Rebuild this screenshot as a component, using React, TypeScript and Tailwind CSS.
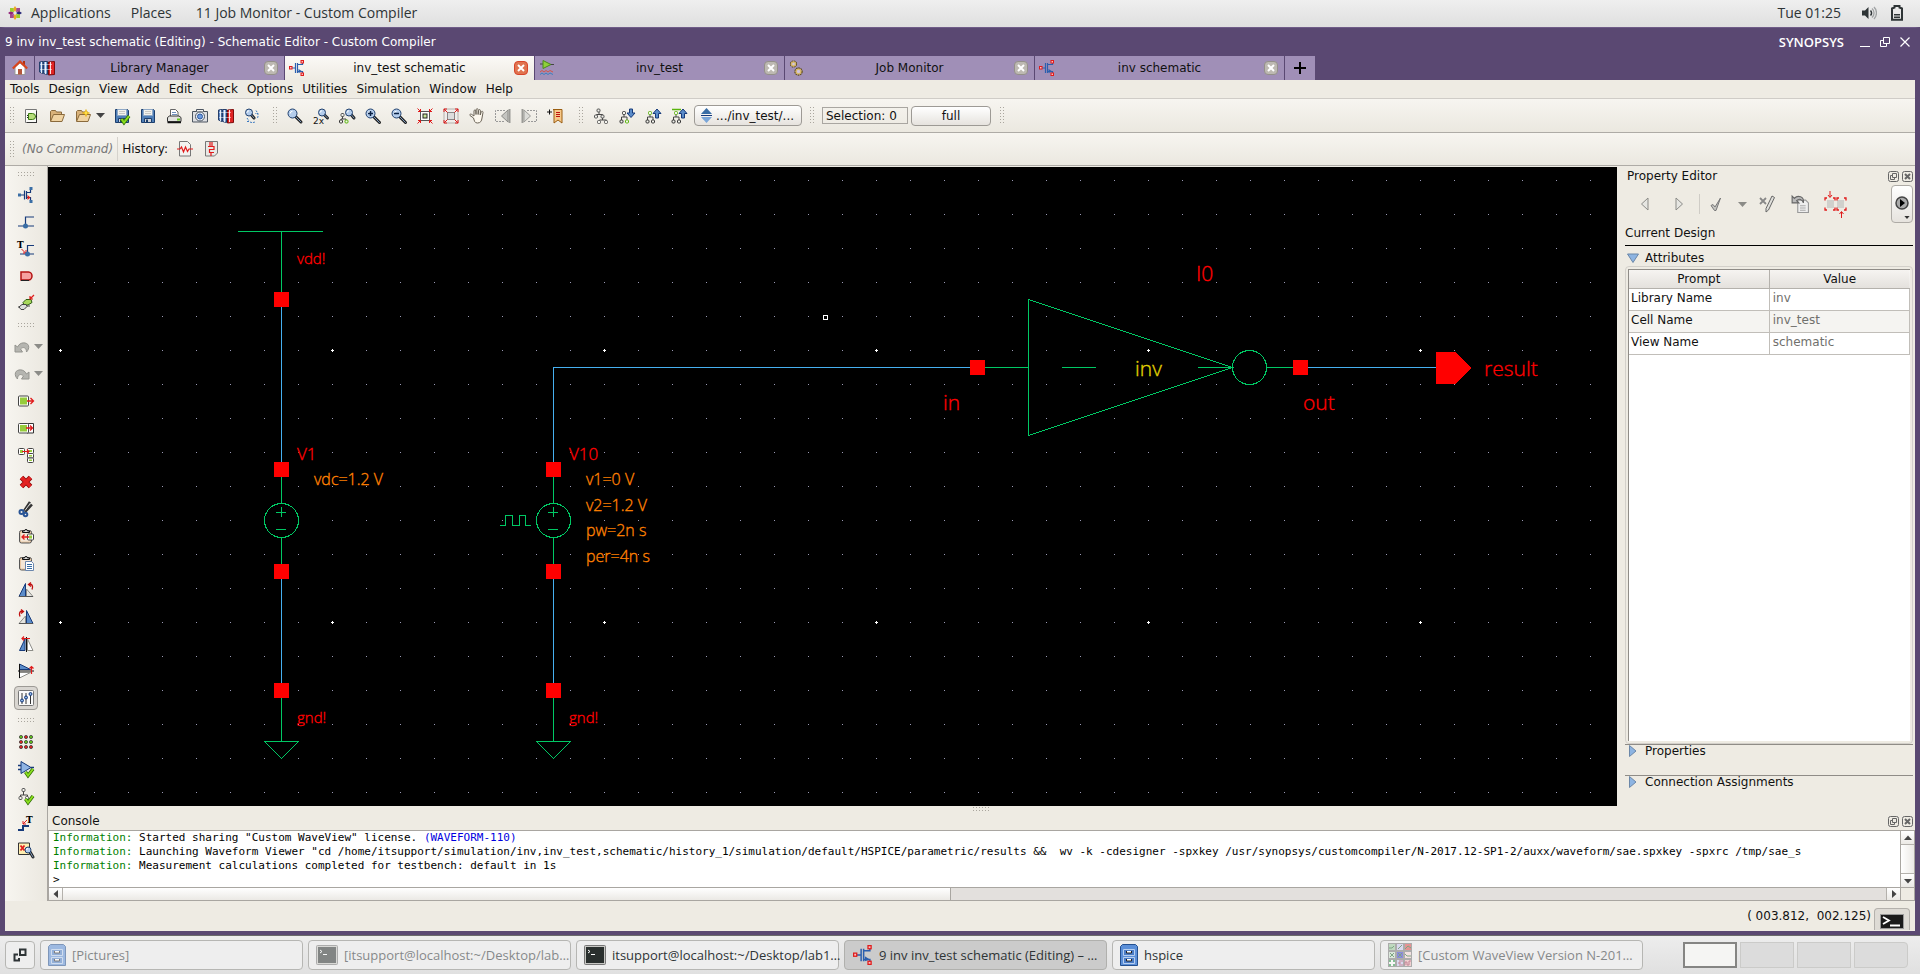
import React from 'react';

const BLUE = '#3a6ea5';
const NAVY = '#163a7a';
const RED = '#e01b1b';

type IconName = keyof typeof icons;

const nodes = (x: number, y: number, color = '#555') => (
  <rect x={x} y={y} width="3" height="3" rx="1" fill="#f4f4ee" stroke={color} />
);

const lens = (cx: number, cy: number, r: number, tx: number, ty: number) => (
  <>
    <path d={`M${cx + r * 0.7} ${cy + r * 0.7}L${tx} ${ty}`} stroke="#222" strokeWidth="3" strokeLinecap="round" />
    <path d={`M${cx + r * 0.7} ${cy + r * 0.7}L${tx} ${ty}`} stroke="#7f9cc0" strokeWidth="1" strokeLinecap="round" />
    <circle cx={cx} cy={cy} r={r} fill="#b4cdec" stroke="#20406e" />
    <path d={`M${cx - r * 0.5} ${cy}a${r * 0.5} ${r * 0.5} 0 0 1 ${r * 0.5} -${r * 0.5}`} stroke="#fff" />
  </>
);

const floppy = (
  <>
    <path d="M1.5 1.5h12l1 1v12h-13z" fill="#4f7fb8" stroke="#1c3e6d" />
    <path d="M3.5 1.5h9v6h-9z" fill="#f2f2ee" stroke="#8fa8c6" />
    <path d="M5 3.5h6M5 5.5h6" stroke="#c8c8c4" />
    <path d="M4.5 10.5h7v4h-7z" fill="#cfd3d8" stroke="#1c3e6d" />
    <path d="M6 11.5h2v3H6z" fill="#1c3e6d" />
  </>
);

const check = (
  <>
    <path d="M7.5 11l2.5 3.5L15 8" stroke="#2f6d05" strokeWidth="3.5" />
    <path d="M7.5 11l2.5 3.5L15 8" stroke="#8ade1f" strokeWidth="2" />
  </>
);

const folder = (
  <>
    <path d="M1.5 13V3.5l1-1h4l1 1.5h5v3" fill="#d9b27a" stroke="#8a6a3c" />
    <path d="M1.5 13.5L4.5 6.5h11l-2.5 7z" fill="#f0d3a2" stroke="#8a6a3c" />
  </>
);

const fet = (wire: string, pin: string) => (
  <>
    <path d="M2 8h4M6.5 3v10M8.5 3v10M9 4.5h4.5V2M9 11.5h4.5V14" stroke={wire} strokeWidth="1.2" />
    <path d="M9.5 9l4 2.5-4 1.5z" fill={wire} />
    <rect x="0.5" y="6.5" width="2.5" height="2.5" fill="#fbb" stroke={pin} />
    <rect x="12" y="0.5" width="2.5" height="2.5" fill="#fbb" stroke={pin} />
    <rect x="12" y="13" width="2.5" height="2.5" fill="#fbb" stroke={pin} />
  </>
);

const hier = (accent: boolean, top: string) => (
  <>
    <path d="M5 6v3M2.5 12V9H8v3" stroke="#444" />
    {nodes(3.5, 3.5, top)}
    {nodes(1, 12, '#333')}
    {nodes(6.5, 12, accent ? '#5ab40c' : '#333')}
  </>
);

const mirrorTri = (
  <>
    <path d="M7.5 1.5V14.5H1z" fill="#5b8cc9" stroke={NAVY} />
    <path d="M8.5 7l6.5 7.5H8.5z" fill="#e4e4e0" stroke="#8d8d88" />
    <path d="M1 14.5h14" stroke="#555" />
  </>
);

const clipboard = (
  <>
    <rect x="1.5" y="2.5" width="12" height="12.5" rx="2" fill="#e9c9a6" stroke="#555" />
    <rect x="3" y="5" width="9" height="8.5" fill="#f4e6d6" />
    <path d="M4.5 4.5V3h2a1.5 1.5 0 0 1 3 0h2v1.5z" fill="#ddd" stroke="#111" />
  </>
);

const greenBox = (x: number, y: number, w: number, h: number) => (
  <>
    <rect x={x} y={y} width={w} height={h} rx="1" fill="#fff" stroke="#444" />
    <rect x={x + 1.5} y={y + 1.5} width={w - 3} height={h - 3} fill="#96cc3c" />
  </>
);

const icons = {
  newCell: (
    <>
      <path d="M2.5 1.5h11v13h-11z" fill="#fafaf7" stroke="#777" />
      <path d="M13 14.5H4M13.5 3v12" stroke="#333" />
      <path d="M4 7.5h2M4 9.5h2M11 8.5h3" stroke="#222" />
      <path d="M5.5 5.5h4a3 3 0 0 1 0 6h-4z" fill="#b7dd7a" stroke="#3b7a12" />
    </>
  ),
  open: folder,
  openStar: (
    <>
      {folder}
      <path d="M11 1.5l1 2.5 2.5 1-2.5 1-1 2.5L10 6 7.5 5 10 4z" fill="#ffe14a" stroke="#e5a800" strokeWidth=".6" />
    </>
  ),
  saveCheck: (
    <>
      {floppy}
      {check}
    </>
  ),
  save: floppy,
  print: (
    <>
      <path d="M4.5 8V1.5h5l2.5 2.5v4" fill="#fff" stroke="#666" />
      <path d="M6 4.5h4M6 6.5h5" stroke="#6e8fbd" />
      <path d="M1.5 13.5v-4l2-1.5h9.5l2 1.5v4z" fill="#e3e3df" stroke="#333" />
      <path d="M1.5 14.5h13.5" stroke="#111" strokeWidth="1.5" />
      <rect x="11" y="10.5" width="3" height="2" fill="#62c61c" />
    </>
  ),
  camera: (
    <>
      <path d="M.5 3.5h15v10.5H.5z" fill="#dedfe2" stroke="#4c5560" />
      <path d="M4.5 3.5V1.5h7v2" fill="#f2f2f2" stroke="#4c5560" />
      <circle cx="8" cy="8.5" r="4.5" fill="#e9f0fa" stroke="#4c5560" />
      <circle cx="8" cy="8.5" r="2.5" fill="#6d9be0" stroke="#2c569b" />
    </>
  ),
  books: (
    <>
      <path d="M.5 2l3.5-.5v12L.5 12z" fill="#5f88c4" stroke="#263f6b" />
      <path d="M4.5 1.5h4v13l-4-1z" fill="#7fa3d4" stroke="#263f6b" />
      <path d="M9.5 2l6-.5v13l-6 .5z" fill="#e02525" stroke="#7d0c0c" />
      <path d="M2.5 2v11M6.5 2v12M11.5 2v12" stroke="#fff" strokeOpacity=".85" />
      <path d="M1 4.5h12M1 9.5h12" stroke="#fff" strokeOpacity=".5" />
    </>
  ),
  sync: (
    <>
      {lens(5, 4.5, 3.5, 10, 10)}
      <path d="M12 2.5l2 3-3 0M13.5 5a6 6 0 0 1 0 5M3 10l2 3M3 13.5h3M6 14a6 6 0 0 0 5 0" stroke="#3c7ac0" strokeDasharray="2 1" />
    </>
  ),
  zoom: lens(5.5, 5.5, 4.5, 14, 14),
  zoom2x: (
    <>
      {lens(9, 4.5, 3.5, 14.5, 10)}
      <text x="0" y="15.5" fontSize="9" fill="#111" fontFamily="DejaVu Sans, sans-serif">2x</text>
    </>
  ),
  zoomHier: (
    <>
      {lens(10, 4.5, 3.5, 15, 10)}
      <path d="M3.5 8v3M2 13v-2h5v2" stroke="#444" />
      {nodes(2, 5.5)}
      {nodes(0.5, 12, '#333')}
      {nodes(6, 12, '#5ab40c')}
    </>
  ),
  zoomIn: (
    <>
      {lens(5.5, 5.5, 4.5, 14.5, 14.5)}
      <path d="M3 5.5h5M5.5 3v5" stroke="#0a2146" strokeWidth="1.5" />
    </>
  ),
  zoomOut: (
    <>
      {lens(5.5, 5.5, 4.5, 14.5, 14.5)}
      <path d="M3 5.5h5" stroke="#0a2146" strokeWidth="1.5" />
    </>
  ),
  fitIn: (
    <>
      <rect x="3.5" y="3.5" width="9" height="9" fill="#fff" stroke="#555" />
      <rect x="6" y="6" width="4" height="4" fill="#c8e59a" stroke="#222" />
      <path d="M.5 .5l3 3M15.5 .5l-3 3M.5 15.5l3-3M15.5 15.5l-3-3M3.5 1v2.5H1M12.5 1v2.5H15M3.5 15v-2.5H1M12.5 15v-2.5H15" stroke={RED} />
    </>
  ),
  fitOut: (
    <>
      <rect x="1" y="1" width="14" height="14" fill="#efedea" stroke="#b5b2ad" />
      <rect x="4.5" y="4.5" width="7" height="7" fill="#ddd" stroke="#888" />
      <path d="M1 1l3.5 3.5M15 1l-3.5 3.5M1 15l3.5-3.5M15 15l-3.5-3.5M1 4V1h3M12 1h3v3M1 12v3h3M15 12v3h-3" stroke={RED} />
    </>
  ),
  hand: (
    <path
      d="M4.5 10L1 7.5c-.8-1 .5-1.8 1.500-1.200L5 8V3c0-1.400 1.800-1.400 1.800 0l.2 3.500L7.200 1.700c0-1.400 1.900-1.400 1.900 0v4.800l.5-4c.2-1.300 1.900-1.200 1.800.2L11.200 7l1-3c.5-1.200 2-.8 1.800.5L13 10c-.3 3-1.500 5-4.500 5S5.500 13 4.500 10z"
      fill="#fdf8ee"
      stroke="#6a6357"
    />
  ),
  prevArea: (
    <>
      <path d="M10 2.5H.5v11H10" stroke="#999" strokeDasharray="2 1" />
      <path d="M13 2v12L6.500 8z" fill="#c4c4c0" stroke="#8b8b87" />
      <path d="M14.5 1v14" stroke="#9b9b97" strokeWidth="2" />
    </>
  ),
  nextArea: (
    <>
      <path d="M6 2.5h9.500v11H6" stroke="#999" strokeDasharray="2 1" />
      <path d="M3 2v12l6.500-6z" fill="#dcdcd8" stroke="#9b9b97" />
      <path d="M1.5 1v14" stroke="#9b9b97" strokeWidth="2" />
    </>
  ),
  bookmark: (
    <>
      <path d="M0 4h5M2.5 1.500v5" stroke="#111" />
      <path d="M6 1.500h9v13.500l-4-3-4 3V2z" fill="#f7c98a" stroke="#9a5d10" />
      <path d="M9 4.500h4M9 6.500h4M9 8.500h4" stroke="#c01010" />
    </>
  ),
  tree: (
    <>
      <path d="M6 4v2M3.500 8V6.500h6v2M9.500 10v2M6.500 14v-2h7v2" stroke="#444" />
      {nodes(4, 1)}
      {nodes(1.5, 7)}
      {nodes(8, 7)}
      {nodes(4.5, 12.5)}
      {nodes(11.5, 12.5)}
    </>
  ),
  descend: (
    <>
      {hier(true, '#333')}
      <path d="M10.500 1h3v4H16l-4 4.500L8 5h2.500z" fill="#5b8cc9" stroke={NAVY} />
    </>
  ),
  ascend: (
    <>
      {hier(false, '#5ab40c')}
      <path d="M12 1l4 4.500h-2.500V10h-3V5.500H8z" fill="#5b8cc9" stroke={NAVY} />
    </>
  ),
  ascendTop: (
    <>
      {hier(false, '#5ab40c')}
      <path d="M1 1.500h9" stroke="#5ab40c" strokeWidth="1.5" />
      <path d="M12 1l4 4.500h-2.500V10h-3V5.500H8z" fill="#5b8cc9" stroke={NAVY} />
    </>
  ),
  histWave: (
    <>
      <path d="M2.500 .5h8l3 3v11.500h-11z" fill="#f3f3f0" stroke="#777" />
      <path d="M0 8h3l1.500-2 2 5 2-5 2 4.500L12 8h4" stroke={RED} strokeWidth="1.2" />
    </>
  ),
  histScript: (
    <>
      <path d="M2.500 .5h12v11.500l-3 3h-9z" fill="#e9e9e5" stroke="#777" />
      <path d="M7 1v4M5 5.500h6v3H6.500v3H11M9 1v4M8 12v3" stroke={RED} strokeWidth="1.2" />
    </>
  ),
  instance: (
    <>
      <path d="M3 8h3M6.500 3.500v9M8.500 4v8M9 5.500h3.500V2M9 10.500h3.500V14" stroke={NAVY} strokeWidth="1.2" />
      <path d="M9.500 8l3 2.500-3 2.500z" fill={RED} />
      <rect x="0" y="6.5" width="3" height="3" fill={BLUE} />
      <rect x="11.5" y="0" width="3" height="3" fill={BLUE} />
      <rect x="11.5" y="13" width="3" height="3" fill={BLUE} />
    </>
  ),
  wire: (
    <>
      <path d="M0 12h16M7.500 12V3H16" stroke={NAVY} strokeWidth="1.2" />
      <circle cx="7.5" cy="12" r="2.5" fill={BLUE} />
    </>
  ),
  wireName: (
    <>
      <text x="-1" y="7" fontSize="9" fontWeight="bold" fill="#000" fontFamily="DejaVu Serif, serif">T</text>
      <path d="M2 13h14M9.500 13V4.500H16" stroke={NAVY} strokeWidth="1.2" />
      <path d="M3.500 8l4 4M8 9v3H5" stroke={RED} />
      <circle cx="9.5" cy="13" r="2.5" fill={BLUE} />
    </>
  ),
  pin: (
    <>
      <path d="M3 4h7.500c2 0 3.500 2 3.500 4s-1.500 4-3.500 4H3z" fill="#f6a0a0" stroke="#b31212" strokeWidth="1.5" />
      <path d="M3 12.500h8" stroke="#222" />
    </>
  ),
  connect: (
    <>
      <path d="M5 7.500l3-3 5 0 1 3-4 2.500H6z" fill="#a9d85c" stroke="#2c5c10" />
      <path d="M1 12l3-2.500h4l1 2-3 3H3zM0 12h2M9 11h3" fill="#ddd" stroke="#444" />
      <path d="M16 0l-4 4M12 1v3h3" stroke={RED} strokeWidth="1.2" />
    </>
  ),
  undo: <path d="M1 13V6l2.500 2C6 2.500 13 3 14.500 6.500c.8 2.500-.5 5-2 6.500 0-4-3-6-6-3l2 3z" fill="#b5b5b0" stroke="#94948f" />,
  redo: <path d="M15 13V6l-2.500 2C10 2.500 3 3 1.500 6.500c-.8 2.500.5 5 2 6.500 0-4 3-6 6-3l-2 3z" fill="#b5b5b0" stroke="#94948f" />,
  move: (
    <>
      {greenBox(0.5, 3, 10, 10)}
      <path d="M9 8h6M12.500 5l3 3-3 3" stroke={RED} strokeWidth="1.3" />
    </>
  ),
  stretch: (
    <>
      <path d="M9 3.500h6.500v9.500H9" fill="#fff" stroke="#333" />
      {greenBox(0.5, 3.5, 10, 9.5)}
      <path d="M8 8h6M12 5.500l2.500 2.500-2.500 2.500" stroke={RED} strokeWidth="1.3" />
    </>
  ),
  copy: (
    <>
      {greenBox(0.5, 1.5, 6, 6)}
      {greenBox(9.5, 1.5, 6, 5)}
      {greenBox(9.5, 6.5, 6, 4.5)}
      {greenBox(9.5, 11, 6, 4.5)}
      <path d="M4 4.500h7M9 2.500l2 2-2 2" stroke={RED} strokeWidth="1.2" />
    </>
  ),
  del: (
    <>
      <path d="M3.500 3.500l9 9M12.500 3.500l-9 9" stroke="#8d0707" strokeWidth="5" />
      <path d="M3.500 3.500l9 9M12.500 3.500l-9 9" stroke="#e32222" strokeWidth="3.5" />
    </>
  ),
  cut: (
    <>
      <path d="M12 1L6 10M14 3.500L7 11" stroke="#333" strokeWidth="2.5" />
      <path d="M12.500 2L7 9.500" stroke="#ddd" />
      <circle cx="3.5" cy="11" r="2" stroke="#2a5596" strokeWidth="2" />
      <circle cx="7.5" cy="13.5" r="1.8" stroke="#2a5596" strokeWidth="2" />
    </>
  ),
  pasteTo: (
    <>
      {clipboard}
      {greenBox(9.5, 6, 6, 6)}
      <path d="M11 9H4M6.500 6.500L4 9l2.500 2.500" stroke={RED} strokeWidth="1.3" />
    </>
  ),
  paste: (
    <>
      {clipboard}
      <path d="M7.500 6.500h6l2 2v7h-8z" fill="#fff" stroke="#6b86ac" />
      <path d="M9 9.500h5M9 11.500h5M9 13.500h5" stroke={BLUE} />
    </>
  ),
  rotL: (
    <>
      {mirrorTri}
      <path d="M11 2.500c3-1 4.500 1.500 3 5M13 .5l-2.500 2 2.500 2" stroke="#c01010" strokeWidth="1.3" />
    </>
  ),
  rotR: (
    <>
      <g transform="translate(16 0) scale(-1 1)">{mirrorTri}</g>
      <path d="M5 2.500c-3-1-4.500 1.500-3 5M3 .5l2.500 2-2.500 2" stroke="#c01010" strokeWidth="1.3" />
    </>
  ),
  mirrorX: (
    <>
      <path d="M7 3v11.500H1.500z" fill="#5b8cc9" stroke={NAVY} />
      <path d="M9.500 3v11.500H15z" fill="#fff" stroke="#8d8d88" />
      <path d="M8.500 1v15" stroke="#111" />
      <path d="M12 2.500H4M6 .5l-2 2 2 2" stroke={RED} strokeWidth="1.2" />
    </>
  ),
  mirrorY: (
    <>
      <path d="M1.500 1l11 5.500h-11z" fill="#5b8cc9" stroke={NAVY} />
      <path d="M1.500 15l11-5.500h-11z" fill="#fff" stroke="#8d8d88" />
      <path d="M0 8h16M1.500 1v14" stroke="#111" />
      <path d="M13.500 11V4M11.500 5.500l2-2 2 2" stroke={RED} strokeWidth="1.2" />
    </>
  ),
  sliders: (
    <>
      <rect x=".5" y=".5" width="15" height="15" rx="1" fill="#fafafa" stroke="#777" />
      <path d="M4 3v11M8 3v11M12.500 3v11" stroke="#333" />
      <circle cx="4" cy="10.5" r="1.5" fill="#8db4e8" stroke={NAVY} />
      <circle cx="8" cy="7.5" r="1.5" fill="#8db4e8" stroke={NAVY} />
      <circle cx="12.5" cy="4" r="1.5" fill="#8db4e8" stroke={NAVY} />
    </>
  ),
  matrix: (
    <>
      {[3, 8, 13].map((y, r) =>
        [3, 8, 13].map((x, c) => (
          <circle
            key={`${x}-${y}`}
            cx={x}
            cy={y}
            r="1.6"
            fill={(r === 0 && c !== 1) || (r === 1 && c > 0) ? '#62c61c' : '#e02525'}
            stroke="#2e2e2e"
            strokeWidth=".7"
          />
        )),
      )}
    </>
  ),
  checkDesign: (
    <>
      <path d="M0 4.500h3M0 8.500h3M13 6.500h3" stroke={NAVY} strokeWidth="1.3" />
      <path d="M3 .5l10 6-10 6z" fill="#8fb4e4" stroke={NAVY} />
      {check}
    </>
  ),
  checkHier: (
    <>
      <path d="M5.500 4v3M2.500 9V7h7v2" stroke="#444" />
      {nodes(4, 0.5)}
      {nodes(1, 8.5)}
      {nodes(7.5, 8.5)}
      {check}
    </>
  ),
  wireLabel: (
    <>
      <text x="8" y="7.5" fontSize="9" fontWeight="bold" fill="#000" fontFamily="DejaVu Serif, serif">T</text>
      <path d="M0 15h5v-4h6" stroke={NAVY} strokeWidth="2" />
      <path d="M9 5L5 9M5 6v3h3" stroke={RED} />
    </>
  ),
  findErr: (
    <>
      <path d="M.5 1h11v11.500H.5z" fill="#ffeeb0" stroke="#333" />
      <path d="M2.500 3.500l4 5M6.500 3.500l-4 5" stroke={RED} strokeWidth="1.8" />
      {lens(10, 8, 3, 15, 15)}
    </>
  ),
  home: (
    <>
      <path d="M3 7v7.500h10V7L8 3z" fill="#fff" stroke="#9a9a96" />
      <path d="M6 9h4v5.500H6z" fill="#b5563a" />
      <path d="M11 1h2v4h-2z" fill="#b03313" />
      <path d="M.8 8.500L8 1.500l7.200 7" stroke="#d9441c" strokeWidth="2.2" />
    </>
  ),
  fet: fet('#2b5fae', '#e01b1b'),
  wave: (
    <>
      <path d="M1 4h4M12 4.500h3" stroke="#444" />
      <path d="M4 .5l8 4-8 4z" fill="#8fd03a" stroke="#4a8a1c" />
      <path d="M1 12l2-1.500 2 1.500 2-1.500 2 1.500 2-1.500 3 1.500" stroke="#d2544a" />
      <path d="M1 14.500L3 13l2 1.500L7 13l2 1.500 2-1.500 3 1.500" stroke="#3a7fc0" />
    </>
  ),
  gears: (
    <>
      <circle cx="4.5" cy="4" r="2.8" stroke="#5a4818" strokeWidth="1.6" strokeDasharray="1.6 .6" />
      <circle cx="4.5" cy="4" r="2" fill="#cfc4e0" stroke="#d8b868" strokeWidth="1.4" />
      <circle cx="9.5" cy="11.5" r="3.4" stroke="#5a4818" strokeWidth="1.6" strokeDasharray="1.6 .6" />
      <circle cx="9.5" cy="11.5" r="2.4" fill="#cfc4e0" stroke="#d8b868" strokeWidth="1.4" />
    </>
  ),
  navPrev: <path d="M11 2v12L4.500 8z" fill="#e6e6e2" stroke="#8b8b87" />,
  navNext: <path d="M5 2v12l6.500-6z" fill="#e6e6e2" stroke="#8b8b87" />,
  apply: <path d="M3 9.500l2-1 2 2.500L12.500 2 8 14.500H6.500z" fill="#c4c4c0" stroke="#777" />,
  editX: (
    <>
      <path d="M1 2l6 6M7 2L1 8" stroke="#888" strokeWidth="1.8" />
      <path d="M13 0l2.500 1.500L9.500 14l-2.500 2V12.500z" fill="#dededa" stroke="#666" />
    </>
  ),
  revert: (
    <>
      <path d="M6 4.500h7l2.500 2.500v8.500H6z" fill="#eee" stroke="#999" />
      <path d="M8 9.500h5M8 11.500h5M8 13.500h5" stroke="#aaa" />
      <path d="M1 1v6h6L5 5c2-2 5-1.500 6 2C12 1.500 6-.5 3 3z" fill="#bbb" stroke="#666" />
    </>
  ),
};

function Icon({ name, size = 'size-4' }: { name: IconName; size?: string }) {
  return (
    <svg viewBox="0 0 16 16" fill="none" className={`${size} shrink-0 overflow-visible`} aria-hidden="true">
      {icons[name]}
    </svg>
  );
}

function Grip({ horizontal = false }: { horizontal?: boolean }) {
  return horizontal ? (
    <svg className="h-1 w-[17px] shrink-0" aria-hidden="true">
      <path d="M0 .5h17M0 3.500h17" stroke="#aaa69e" strokeDasharray="1 2" />
    </svg>
  ) : (
    <svg className="h-[17px] w-1 shrink-0" aria-hidden="true">
      <path d="M.5 0v17M3.500 0v17" stroke="#aaa69e" strokeDasharray="1 2" />
    </svg>
  );
}

function Caret({ color = '#444' }: { color?: string }) {
  return (
    <svg viewBox="0 0 9 5" className="h-[5px] w-[9px] shrink-0" aria-hidden="true">
      <path d="M0 0h9L4.500 5z" fill={color} />
    </svg>
  );
}

function Tool({ name, label }: { name: IconName; label: string }) {
  return (
    <button type="button" aria-label={label} className="flex h-6 w-[26px] items-center justify-center">
      <Icon name={name} />
    </button>
  );
}

const tabs: { label: string; icon: IconName; active?: boolean }[] = [
  { label: 'Library Manager', icon: 'books' },
  { label: 'inv_test schematic', icon: 'fet', active: true },
  { label: 'inv_test', icon: 'wave' },
  { label: 'Job Monitor', icon: 'gears' },
  { label: 'inv schematic', icon: 'fet' },
];

const menus = ['Tools', 'Design', 'View', 'Add', 'Edit', 'Check', 'Options', 'Utilities', 'Simulation', 'Window', 'Help'];

const viewTools: [IconName, string][] = [
  ['zoom', 'Zoom'],
  ['zoom2x', 'Zoom 2x'],
  ['zoomHier', 'Zoom to hierarchy'],
  ['zoomIn', 'Zoom in'],
  ['zoomOut', 'Zoom out'],
  ['fitIn', 'Fit selection'],
  ['fitOut', 'Fit all'],
  ['hand', 'Pan'],
  ['prevArea', 'Previous area'],
  ['nextArea', 'Next area'],
  ['bookmark', 'Bookmark'],
];

const sideA: [IconName, string][] = [
  ['instance', 'Add instance'],
  ['wire', 'Add wire'],
  ['wireName', 'Add wire name'],
  ['pin', 'Add pin'],
  ['connect', 'Connect'],
];

const sideB: [IconName, string][] = [
  ['undo', 'Undo'],
  ['redo', 'Redo'],
  ['move', 'Move'],
  ['stretch', 'Stretch'],
  ['copy', 'Copy'],
  ['del', 'Delete'],
  ['cut', 'Cut'],
  ['pasteTo', 'Paste to'],
  ['paste', 'Paste'],
  ['rotL', 'Rotate left'],
  ['rotR', 'Rotate right'],
  ['mirrorX', 'Mirror X'],
  ['mirrorY', 'Mirror Y'],
  ['sliders', 'Options'],
];

const sideC: [IconName, string][] = [
  ['matrix', 'Array'],
  ['checkDesign', 'Check design'],
  ['checkHier', 'Check hierarchy'],
  ['wireLabel', 'Wire label'],
  ['findErr', 'Find errors'],
];

function SideTool({ name, label }: { name: IconName; label: string }) {
  const split = name === 'undo' || name === 'redo';
  const pressed = name === 'sliders';
  return (
    <div className="flex h-[27px] items-center justify-center">
      <button
        type="button"
        aria-label={label}
        className={
          pressed
            ? 'flex size-6 items-center justify-center rounded-sm border border-[#9d9a95] bg-[#d9d6d1]'
            : 'flex size-6 items-center justify-center'
        }
      >
        <Icon name={name} />
      </button>
      {split && <Caret color="#8b8b87" />}
    </div>
  );
}

function Schematic() {
  const G = '#00c864';
  const B = '#46b0f0';
  const pins = [
    [274, 292], [274, 462], [274, 564], [274, 683],
    [546, 462], [546, 564], [546, 683], [970, 360], [1293, 360],
  ];
  return (
    <svg className="absolute inset-0 size-full" role="img" aria-label="inv_test schematic">
      <defs>
        <pattern id="minor" x="12" y="13" width="34" height="34" patternUnits="userSpaceOnUse">
          <rect width="1" height="1" fill="#9a9ab4" />
        </pattern>
        <pattern id="major" x="11" y="182" width="272" height="272" patternUnits="userSpaceOnUse">
          <path d="M0 1h3v1H0zM1 0h1v3H1z" fill="#fff" />
        </pattern>
      </defs>
      <rect width="100%" height="100%" fill="#000" />
      <rect width="100%" height="100%" fill="url(#minor)" />
      <rect width="100%" height="100%" fill="url(#major)" />
      <g transform="translate(-48 -167)" fill="none" shapeRendering="crispEdges">
        <path d="M281.500 307v155M281.500 579v104M553.500 579v104M553.500 462V367.500H970M1308 367.500h128" stroke={B} />
        <g stroke={G}>
          <path d="M238 231.500h85M281.500 231v61" />
          {[281.5, 553.5].map((x) => (
            <React.Fragment key={x}>
              <path d={`M${x} 477v26M${x} 537v27M${x} 698v43M${x - 17} 741.500h34l-17 17z`} />
              <circle cx={x} cy="520.5" r="17" />
              <path d={`M${x - 5.5} 512.500h10M${x} 507v10M${x - 5.5} 529.500h10`} />
            </React.Fragment>
          ))}
          <path d="M500 525.500h5.500v-10h7v10h7v-10h6v10h5.500" />
          <path d="M985 367.500h43M1062 367.500h34M1198 367.500h34M1266 367.500h27" />
          <path d="M1028.500 299.500v136l204-68z" />
          <circle cx="1249.5" cy="367.5" r="17" />
        </g>
        <g fill="#f00">
          {pins.map(([x, y]) => (
            <rect key={`${x}-${y}`} x={x} y={y} width="15" height="15" />
          ))}
          <path d="M1436 352h19l16 16-16 16h-19z" />
        </g>
        <rect x="823.5" y="315.5" width="4" height="4" stroke="#fff" />
      </g>
      <g
        transform="translate(-48 -167)"
        fontFamily="'Open Sans', 'Noto Sans', sans-serif"
        fontWeight="300"
        fill="#f00"
        stroke="#f00"
        strokeWidth=".35"
      >
        <g fontSize="15">
          <text x="297" y="264">vdd!</text>
          <text x="297" y="723">gnd!</text>
          <text x="569" y="723">gnd!</text>
        </g>
        <g fontSize="17">
          <text x="297" y="460">V1</text>
          <text x="569" y="460">V10</text>
        </g>
        <g fontSize="16" fill="#ff8000" stroke="#ff8000">
          <text x="314" y="485">vdc=1.2 V</text>
          <text x="586" y="485">v1=0 V</text>
          <text x="586" y="511">v2=1.2 V</text>
          <text x="586" y="536">pw=2n s</text>
          <text x="586" y="562">per=4n s</text>
        </g>
        <g fontSize="21">
          <text x="1196" y="281">I0</text>
          <text x="943" y="410">in</text>
          <text x="1303" y="410">out</text>
          <text x="1484" y="376">result</text>
          <text x="1135" y="376" fill="#e0d000" stroke="#e0d000">inv</text>
        </g>
      </g>
    </svg>
  );
}

function DockButtons() {
  return (
    <div className="flex gap-[3px]">
      <button type="button" aria-label="Float panel" className="size-[11px]">
        <svg viewBox="0 0 11 11" fill="none" stroke="#666" className="size-[11px]">
          <rect x=".5" y=".5" width="10" height="10" rx="2" />
          <path d="M4.500 2.500h4v4h-4zM6.500 6.500v2h-4v-4h2" />
        </svg>
      </button>
      <button type="button" aria-label="Close panel" className="size-[11px]">
        <svg viewBox="0 0 11 11" fill="none" stroke="#666" className="size-[11px]">
          <rect x=".5" y=".5" width="10" height="10" rx="2" />
          <path d="M3 3l5 5M8 3L3 8" strokeWidth="2" />
        </svg>
      </button>
    </div>
  );
}

function Disclosure({ open = false }: { open?: boolean }) {
  return (
    <svg viewBox="0 0 12 12" className="size-3 shrink-0" aria-hidden="true">
      {open ? (
        <path d="M.5 2h11L6 10.500z" fill="#8db4e2" stroke="#6b87a8" />
      ) : (
        <path d="M2.500 .5v11L9 6z" fill="#8db4e2" stroke="#6b87a8" />
      )}
    </svg>
  );
}

function PropertyEditor() {
  const rows = [
    ['Library Name', 'inv'],
    ['Cell Name', 'inv_test'],
    ['View Name', 'schematic'],
  ];
  return (
    <aside className="flex w-[298px] shrink-0 flex-col pr-0.5 pl-2">
      <div className="flex h-5 items-center justify-between pl-0.5">
        <h2>Property Editor</h2>
        <DockButtons />
      </div>
      <div className="flex h-9 items-center pl-3">
        <button type="button" aria-label="Previous" className="flex w-4 justify-center"><Icon name="navPrev" /></button>
        <button type="button" aria-label="Next" className="ml-[18px] flex w-4 justify-center"><Icon name="navNext" /></button>
        <div className="mr-2 ml-3 h-5 w-px bg-[#cfccc6]" />
        <button type="button" aria-label="Apply"><Icon name="apply" /></button>
        <button type="button" aria-label="Apply options" className="mr-3 ml-3.5"><Caret color="#8b8b87" /></button>
        <button type="button" aria-label="Discard edits"><Icon name="editX" /></button>
        <button type="button" aria-label="Revert" className="ml-4"><Icon name="revert" size="size-[18px]" /></button>
        <button type="button" aria-label="Compare" className="ml-4">
          <svg viewBox="0 0 22 22" fill="none" className="size-[22px] overflow-visible">
            <rect x="2" y="7" width="7" height="8" fill="#d0d0cc" />
            <rect x="12" y="7" width="7" height="8" fill="#d0d0cc" />
            <path d="M0 7.500V5h2M8 5h2v2.500M12 7.500V5h2M19 5h2v2.500M0 14.500V17h2M8 17h2v-2.500M12 14.500V17h2M19 17h2v-2.500" stroke={RED} strokeWidth="1.3" />
            <path d="M5 -2v6M3 2l2 2.500L7 2M16.500 25v-6M14.500 21l2-2.500 2 2.500" stroke={RED} />
          </svg>
        </button>
        <button
          type="button"
          aria-label="Run"
          className="ml-auto flex h-[38px] w-[22px] flex-col items-center justify-end gap-1.5 rounded-sm border border-[#aeaba6] bg-linear-to-b from-white to-[#e6e3de] pb-[3px]"
        >
          <svg viewBox="0 0 14 14" className="size-3.5">
            <circle cx="7" cy="7" r="6" fill="#aaa" stroke="#444" strokeWidth="1.5" />
            <path d="M5 3v8l5-4z" fill="#000" />
          </svg>
          <svg viewBox="0 0 7 4" className="mr-0.5 h-[3px] w-1.5 self-end"><path d="M0 0h7L3.500 4z" fill="#333" /></svg>
        </button>
      </div>
      <p className="flex h-5 items-end pb-px">Current Design</p>
      <div className="mt-[3px] mb-[3px] border-t border-black" />
      <button type="button" className="flex h-[17px] items-center gap-1.5 pl-0.5">
        <Disclosure open />
        Attributes
      </button>
      <div className="min-h-0 flex-1 rounded-sm border border-[#d3d0ca] p-0.5">
        <div className="h-full border-t border-l border-[#8f8c87] bg-white">
          <table className="w-full table-fixed border-collapse">
            <thead>
              <tr className="h-[18px] bg-linear-to-b from-[#f6f4f1] to-[#e4e1dd]">
                <th className="border-r border-b border-[#b4b1ac] p-0 font-normal leading-4">Prompt</th>
                <th className="border-b border-[#b4b1ac] p-0 font-normal leading-4">Value</th>
              </tr>
            </thead>
            <tbody>
              {rows.map(([k, v]) => (
                <tr key={k} className="h-[22px] even:bg-[#f5f4f1]">
                  <td className="border border-l-0 border-[#c1beb9] p-0 pb-0.5 pl-0.5">{k}</td>
                  <td className="border border-[#c1beb9] p-0 pb-0.5 pl-[3px] text-[#70706c]">{v}</td>
                </tr>
              ))}
            </tbody>
          </table>
        </div>
      </div>
      {['Properties', 'Connection Assignments'].map((t) => (
        <button key={t} type="button" className="flex h-[31px] items-start gap-1.5 border-t border-[#8f8c87] pl-0.5">
          <Disclosure />
          <span className="leading-[13px]">{t}</span>
        </button>
      ))}
    </aside>
  );
}

function ScrollArrow({ d, label, className }: { d: string; label: string; className: string }) {
  return (
    <button type="button" aria-label={label} className={`flex items-center justify-center bg-linear-to-b from-white to-[#ebe9e5] ${className}`}>
      <svg viewBox="0 0 8 8" className="size-2"><path d={d} fill="#444" /></svg>
    </button>
  );
}

function Console() {
  const lines = [
    ['Started sharing "Custom WaveView" license. ', '(WAVEFORM-110)'],
    [
      'Launching Waveform Viewer "cd /home/itsupport/simulation/inv,inv_test,schematic/history_1/simulation/default/HSPICE/parametric/results &&  wv -k -cdesigner -spxkey /usr/synopsys/customcompiler/N-2017.12-SP1-2/auxx/waveform/sae.spxkey -spxrc /tmp/sae_s',
    ],
    ['Measurement calculations completed for testbench: default in 1s'],
  ];
  return (
    <section className="flex h-[95px] shrink-0 flex-col">
      <div className="flex h-1.5 items-center justify-center"><Grip horizontal /></div>
      <div className="flex h-[18px] items-center justify-between pr-0.5 pl-1">
        <h2>Console</h2>
        <DockButtons />
      </div>
      <div className="flex min-h-0 flex-1 border border-[#a9a6a1]">
        <div className="flex min-w-0 flex-1 flex-col">
          <div className="flex-1 overflow-hidden bg-white pl-1 font-['DejaVu_Sans_Mono',monospace] text-[11px] leading-[14px] whitespace-pre text-black">
            {lines.map(([text, code]) => (
              <p key={text}>
                <span className="text-[#007f00]">Information: </span>
                {text}
                {code && <span className="text-[#0000e0]">{code}</span>}
              </p>
            ))}
            <p>&gt;</p>
          </div>
          <div className="flex h-[13px] border-t border-[#a9a6a1] bg-[#e3e0dd]">
            <ScrollArrow d="M6 0v8L1.500 4z" label="Scroll left" className="w-3.5 border-r border-[#b4b1ac]" />
            <div className="w-[48%] border-r border-[#a9a6a1] bg-linear-to-b from-white to-[#ebe9e5]" />
            <ScrollArrow d="M2 0v8l4.500-4z" label="Scroll right" className="ml-auto w-3.5 border-l border-[#b4b1ac]" />
          </div>
        </div>
        <div className="flex w-3.5 flex-col border-l border-[#a9a6a1]">
          <ScrollArrow d="M0 6h8L4 1.500z" label="Scroll up" className="h-3.5 border-b border-[#b4b1ac]" />
          <div className="flex-1 bg-linear-to-r from-white to-[#ebe9e5]" />
          <ScrollArrow d="M0 2h8L4 6.500z" label="Scroll down" className="h-3.5 border-t border-[#b4b1ac]" />
          <div className="h-[13px] border-t border-[#a9a6a1] bg-[#eeebe3]" />
        </div>
      </div>
    </section>
  );
}

function TaskIcon({ kind }: { kind: string }) {
  if (kind === 'cabinet')
    return (
      <svg viewBox="0 0 18 22" fill="none" className="h-[22px] w-[18px] shrink-0">
        <path d="M.5 21.500v-19l2-2h13l2 2v19z" fill="#5b8fd8" stroke="#24508f" />
        <path d="M3.500 5.500h11v6h-11zM3.500 13.500h11v6h-11z" fill="#4a7cc6" stroke="#b8d0f0" />
        <path d="M6.500 7v2h5V7M6.500 15v2h5v-2" fill="#fff" stroke="#222" />
      </svg>
    );
  if (kind === 'terminal')
    return (
      <svg viewBox="0 0 22 20" fill="none" className="h-5 w-[22px] shrink-0">
        <rect x=".5" y=".5" width="21" height="19" rx="1" fill="#c8c8c4" stroke="#777" />
        <rect x="2" y="2" width="18" height="16" fill="#2a302e" />
        <path d="M4 5l2 1.500L4 8M7 9.500h4" stroke="#fff" />
      </svg>
    );
  if (kind === 'fet') return <Icon name="fet" size="size-5" />;
  const fills = ['#9ac89a', '#c8c8ee', '#e04848', '#cfe4cf', '#3b3bd0', '#f6d6d6', '#2f9a4a', '#c8c8ee', '#f2b8b8'];
  return (
    <svg viewBox="0 0 24 24" fill="none" className="size-6 shrink-0">
      {fills.map((f, i) => (
        <rect key={i} x={(i % 3) * 8 + 0.5} y={Math.floor(i / 3) * 8 + 0.5} width="7" height="7" fill={f} stroke="#777" />
      ))}
      <path d="M1 5h3l2-2M10 6l4-4M17 6l3-3 3 2M2 10l4 4M6 10l-4 4M10 10l4 4M14 10l-4 4M17 11l2 2h4" stroke="#236b2f" />
      <path d="M4 17v6M1 20h6" stroke="#fff" strokeWidth="2" />
      <path d="M10 20h2M13 18h2M13 22h2M12 17v6M17 22v-3h2v3h2v-4h2" stroke="#a03050" />
    </svg>
  );
}

const tasks = [
  { kind: 'cabinet', label: '[Pictures]', dim: true },
  { kind: 'terminal', label: '[itsupport@localhost:~/Desktop/lab…', dim: true },
  { kind: 'terminal', label: 'itsupport@localhost:~/Desktop/lab1…' },
  { kind: 'fet', label: '9 inv inv_test schematic (Editing) – …', active: true },
  { kind: 'cabinet', label: 'hspice' },
  { kind: 'wave', label: '[Custom WaveView Version N-201…', dim: true },
];

export default function App() {
  return (
    <div className="flex h-screen flex-col overflow-hidden bg-[#e4e4e4] font-['DejaVu_Sans',sans-serif] text-xs leading-4 text-[#111]">
      <header className="flex h-[27px] shrink-0 items-center bg-linear-to-b from-[#efefef] to-[#dfdfdf] pb-0.5 pl-2 font-['Open_Sans','Noto_Sans',sans-serif] text-sm text-[#2e3436]">
        <svg viewBox="0 0 14 14" className="mr-[9px] size-3.5" aria-hidden="true">
          <path d="M7 0l2 3-2 3-2-3z" fill="#efa724" />
          <path d="M14 7l-3 2-3-2 3-2z" fill="#262577" />
          <path d="M7 14l-2-3 2-3 2 3z" fill="#efa724" />
          <path d="M0 7l3-2 3 2-3 2z" fill="#932279" />
          <path d="M2 2h3.500L6 6 2 5.500zM12 12H8.500L8 8l4 .5z" fill="#9ccd2a" />
          <path d="M12 2v3.500L8 6l.5-4zM2 12V8.500L6 8l-.5 4z" fill="#932279" fillOpacity=".8" />
        </svg>
        <button type="button">Applications</button>
        <button type="button" className="ml-5">Places</button>
        <button type="button" className="ml-6">11 Job Monitor - Custom Compiler</button>
        <span className="ml-auto">Tue 01:25</span>
        <svg viewBox="0 0 16 16" fill="none" className="ml-5 size-4" aria-label="Volume">
          <path d="M1 5.500h3L7.500 2v12L4 10.500H1z" fill="#2e3436" />
          <path d="M9.500 5.500a3.500 3.500 0 0 1 0 5" stroke="#2e3436" strokeWidth="1.5" />
          <path d="M11 3.500a6 6 0 0 1 0 9M13 2a8.500 8.500 0 0 1 0 12" stroke="#a0a3a4" strokeWidth="1.3" />
        </svg>
        <svg viewBox="0 0 12 16" fill="none" className="mr-[17px] ml-[14px] h-4 w-3" aria-label="Battery">
          <path d="M1 14.800V3.500l2.500-1V1h5v1.500l2.500 1v11.300z" stroke="#2e3436" strokeWidth="2" />
          <path d="M3 9h6v1.500H3zM3 11.500h6V13H3z" fill="#2e3436" />
        </svg>
      </header>

      <div className="flex min-h-0 flex-1 flex-col border-x-[5px] border-t border-b-4 border-[#5a4872] border-t-[#6f5c88] bg-[#eeebe3]">
        <div className="flex h-7 shrink-0 items-center bg-[#5a4872] pr-[5px] text-white">
          <h1>9 inv inv_test schematic (Editing) - Schematic Editor - Custom Compiler</h1>
          <span className="ml-auto font-['Liberation_Sans_Narrow','Open_Sans',sans-serif] text-[13px] font-semibold">SYNOPSYS</span>
          <div className="ml-4 flex items-center gap-2.5">
            <button type="button" aria-label="Minimize">
              <svg viewBox="0 0 10 10" className="size-2.5"><path d="M0 9.500h10" stroke="#fff" /></svg>
            </button>
            <button type="button" aria-label="Restore">
              <svg viewBox="0 0 10 10" fill="none" className="size-2.5"><path d="M3.500 .5h6v6h-6zM6.500 6.500v3h-6v-6h3" stroke="#fff" /></svg>
            </button>
            <button type="button" aria-label="Close">
              <svg viewBox="0 0 10 10" className="size-2.5"><path d="M.5 .5l9 9M9.500 .5l-9 9" stroke="#fff" strokeWidth="1.2" /></svg>
            </button>
          </div>
        </div>

        <div className="flex h-6 shrink-0 gap-px bg-[#5a4872]" role="tablist">
          <button type="button" aria-label="Home" className="flex w-[29px] items-center justify-center bg-[#a08fb7]">
            <Icon name="home" />
          </button>
          {tabs.map((t) => (
            <div
              key={t.label}
              role="tab"
              aria-selected={!!t.active}
              className={
                t.active
                  ? 'flex w-[249px] items-center bg-linear-to-b from-[#fbf9f6] to-[#eeebe3] pr-1.5 pl-1'
                  : 'flex w-[249px] items-center bg-[#a08fb7] pr-1.5 pl-1'
              }
            >
              <Icon name={t.icon} />
              <span className="flex-1 text-center">{t.label}</span>
              <button
                type="button"
                aria-label={`Close ${t.label}`}
                className={
                  t.active
                    ? 'flex size-3.5 items-center justify-center rounded-sm border border-[#d8452a] bg-[#e07450]'
                    : 'flex size-3.5 items-center justify-center rounded-sm border border-[#94908a] bg-[#bdb9b2]'
                }
              >
                <svg viewBox="0 0 8 8" className="size-2"><path d="M1 1l6 6M7 1L1 7" stroke="#fff" strokeWidth="2" /></svg>
              </button>
            </div>
          ))}
          <button type="button" aria-label="New tab" className="flex w-[30px] items-center justify-center bg-[#a08fb7]">
            <svg viewBox="0 0 12 12" className="size-3"><path d="M0 6h12M6 0v12" stroke="#000" strokeWidth="2" /></svg>
          </button>
        </div>

        <nav className="flex h-[18px] shrink-0 items-center gap-[9px] pl-[5px]">
          {menus.map((m) => (
            <button key={m} type="button">{m}</button>
          ))}
        </nav>

        <div className="flex h-[34px] shrink-0 items-center border-t border-[#cfccc7] bg-linear-to-b from-[#f7f5f0] to-[#ebe8e0] pl-[5px]">
          <Grip />
          <div className="ml-1 flex items-center">
            <Tool name="newCell" label="New" />
            <Tool name="open" label="Open" />
            <Tool name="openStar" label="Open recent" />
            <button type="button" aria-label="Recent list" className="w-[13px]"><Caret /></button>
            <Tool name="saveCheck" label="Check and save" />
            <Tool name="save" label="Save" />
            <Tool name="print" label="Print" />
            <Tool name="camera" label="Snapshot" />
            <Tool name="books" label="Library" />
            <Tool name="sync" label="Synchronise" />
          </div>
          <div className="mr-[5px] ml-2"><Grip /></div>
          {viewTools.map(([n, l]) => (
            <Tool key={n} name={n} label={l} />
          ))}
          <div className="mr-[5px] ml-[11px]"><Grip /></div>
          <Tool name="tree" label="Hierarchy" />
          <Tool name="descend" label="Descend" />
          <Tool name="ascend" label="Ascend" />
          <Tool name="ascendTop" label="Ascend to top" />
          <button type="button" className="ml-0.5 flex h-[21px] w-[108px] items-center gap-1 rounded-sm border border-[#9d9a95] bg-linear-to-b from-white to-[#e6e3de] pl-1.5">
            <svg viewBox="0 0 11 15" className="h-[15px] w-[11px]">
              <path d="M5.500 0L11 6H0z" fill={BLUE} />
              <path d="M0 7.500h11" stroke={NAVY} />
              <path d="M5.500 15L11 9H0z" fill="#7aa6d8" />
            </svg>
            .../inv_test/...
          </button>
          <div className="mr-2 ml-2"><Grip /></div>
          <output className="flex h-[17px] w-[86px] items-center border border-[#a9a6a1] pl-[3px]">Selection: 0</output>
          <button type="button" className="ml-[3px] h-5 w-20 rounded-sm border border-[#9d9a95] bg-linear-to-b from-white to-[#e6e3de] leading-4">full</button>
          <div className="ml-[9px]"><Grip /></div>
        </div>

        <div className="flex h-[34px] shrink-0 items-center border-y border-[#aeaba6] bg-linear-to-b from-[#f7f5f0] to-[#ebe8e0] pl-[5px]">
          <Grip />
          <span className="ml-2 whitespace-nowrap text-[#777] italic">(No Command)</span>
          <div className="mx-1 h-6 w-px bg-[#d5d2cc]" />
          <span>History:</span>
          <div className="ml-1 flex">
            <Tool name="histWave" label="Waveform history" />
            <Tool name="histScript" label="Script history" />
          </div>
        </div>

        <div className="flex min-h-0 flex-1">
          <div className="flex w-[43px] shrink-0 flex-col border-r border-[#a9a6a1] bg-linear-to-r from-[#f7f5f0] to-[#ebe8e0]">
            <div className="flex h-[15px] items-center justify-center"><Grip horizontal /></div>
            {sideA.map(([n, l]) => <SideTool key={n} name={n} label={l} />)}
            <div className="flex h-[17px] items-center justify-center"><Grip horizontal /></div>
            {sideB.map(([n, l]) => <SideTool key={n} name={n} label={l} />)}
            <div className="flex h-[17px] items-center justify-center"><Grip horizontal /></div>
            {sideC.map(([n, l]) => <SideTool key={n} name={n} label={l} />)}
          </div>
          <div className="flex min-w-0 flex-1 flex-col">
            <div className="flex min-h-0 flex-1">
              <main className="relative mt-px min-w-0 flex-1 bg-black">
                <Schematic />
              </main>
              <PropertyEditor />
            </div>
            <Console />
          </div>
        </div>

        <footer className="flex h-[30px] shrink-0 items-center justify-end pr-[5px]">
          <span className="whitespace-pre">( 003.812,  002.125)</span>
          <button type="button" aria-label="Toggle console" className="mt-[5px] ml-[3px] flex h-[22px] w-9 items-end justify-center rounded-t-sm border border-b-0 border-[#b4b1ac] bg-[#dedbd5] pb-px">
            <svg viewBox="0 0 24 15" fill="none" className="h-[15px] w-6">
              <rect x=".5" y=".5" width="23" height="14" fill="#1b1b1b" stroke="#999" />
              <path d="M3 3l6 3.500L3 10M10 11.500h10" stroke="#fff" strokeWidth="1.8" />
            </svg>
          </button>
        </footer>
      </div>

      <div className="flex h-[39px] shrink-0 items-center gap-[5px] border-t border-[#6b6b6b] bg-linear-to-b from-[#ededed] to-[#e0e0e0] pl-[5px] font-['Open_Sans','Noto_Sans',sans-serif] text-[13px] text-[#2e3436]">
        <button type="button" aria-label="Show desktop" className="flex h-7 w-[30px] items-center justify-center rounded-sm border border-[#b6b6b3] bg-[#eeeeee]">
          <svg viewBox="0 0 14 14" fill="none" className="size-3.5"><path d="M7 1.500h5.500V7H7zM5 6.500H1.500v6H6V10" stroke="#2e3436" strokeWidth="2" /></svg>
        </button>
        {tasks.map((t) => (
          <button
            key={t.label}
            type="button"
            className={
              t.active
                ? 'flex h-[30px] w-[263px] items-center rounded-sm border border-[#b0b0ad] bg-[#cbcbcb] pl-2'
                : 'flex h-[30px] w-[263px] items-center rounded-sm border border-[#b6b6b3] bg-[#eeeeee] pl-[7px]'
            }
          >
            <span className={t.dim ? 'flex items-center gap-1.5 opacity-55' : 'flex items-center gap-1.5'}>
              <TaskIcon kind={t.kind} />
              <span className="whitespace-nowrap">{t.label}</span>
            </span>
          </button>
        ))}
        <div className="mr-3 ml-auto flex gap-[3px]">
          <button type="button" aria-label="Workspace 1" className="h-[26px] w-[54px] border-2 border-[#858583] bg-[#f5f5f3]" />
          <button type="button" aria-label="Workspace 2" className="h-[26px] w-[54px] border border-[#cbcbc9] bg-[#dcdcdc]" />
          <button type="button" aria-label="Workspace 3" className="h-[26px] w-[54px] border border-[#cbcbc9] bg-[#dcdcdc]" />
          <button type="button" aria-label="Workspace 4" className="h-[26px] w-[54px] rounded-r-sm border border-[#cbcbc9] bg-[#dcdcdc]" />
        </div>
      </div>
    </div>
  );
}
